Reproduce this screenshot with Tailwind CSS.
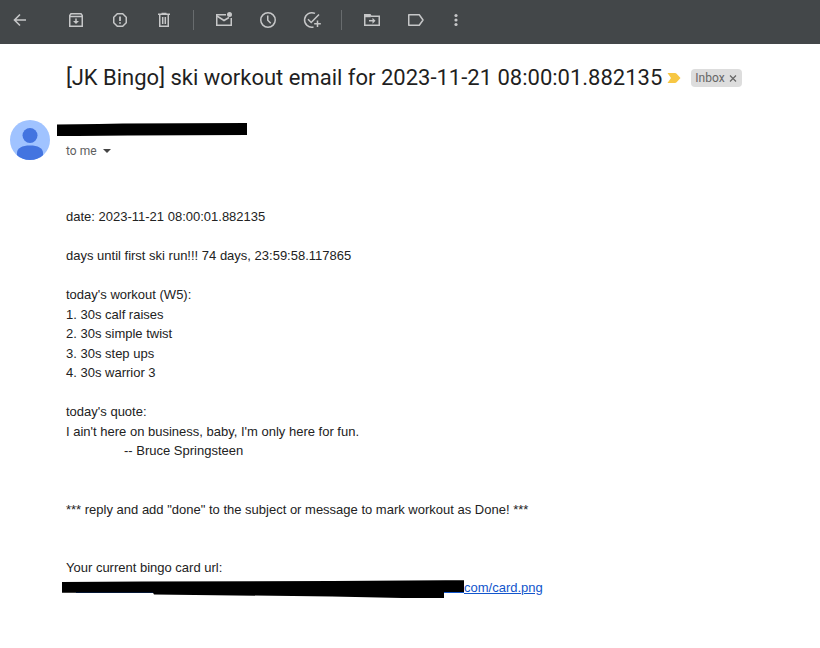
<!DOCTYPE html>
<html lang="en">
<head>
<meta charset="utf-8">
<meta name="viewport" content="width=device-width, initial-scale=1">
<title>[JK Bingo] ski workout email</title>
<script src="https://cdn.jsdelivr.net/npm/@tailwindcss/browser@4"></script>
</head>
<body class="min-h-screen bg-white font-['Liberation_Sans',Arial,sans-serif] text-[#222222]">
<header class="h-11 bg-[#434749] pb-1 text-[#c6c7c8]">
  <nav class="flex h-10 items-center" aria-label="Message actions">
    <button class="mr-3.5 flex h-10 w-10 items-center justify-center" aria-label="Back">
      <svg class="size-5" viewBox="0 0 20 20" fill="none" stroke="currentColor" stroke-width="1.6"><path d="M16 10H5M10 4.5 4.5 10l5.500 5.500"/></svg>
    </button>
    <button class="flex h-10 w-11 items-center justify-center" aria-label="Archive">
      <svg class="size-5" viewBox="0 0 20 20" fill="none" stroke="currentColor" stroke-width="1.5"><path d="M3.750 5.500 5 3.750h10l1.250 1.750v10.750H3.750z"/><path d="M4 6.500h12"/><path d="M10 8.500v4"/><path d="M7 11h6l-3 3z" fill="currentColor" stroke="none"/></svg>
    </button>
    <button class="flex h-10 w-11 items-center justify-center" aria-label="Report spam">
      <svg class="size-5" viewBox="0 0 20 20" fill="none" stroke="currentColor" stroke-width="1.5"><path d="M7.300 3.750h5.400l3.550 3.550v5.400l-3.550 3.550H7.300L3.750 12.700V7.300z"/><path stroke-width="1.8" d="M10 6.500v4.500M10 12.200v1.600"/></svg>
    </button>
    <button class="flex h-10 w-11 items-center justify-center" aria-label="Delete">
      <svg class="size-5" viewBox="0 0 20 20" fill="none" stroke="currentColor" stroke-width="1.500"><path d="M4 4.250h12M5.750 4.500v11.750h8.500V4.500M8.700 7v7M11.300 7v7"/><path d="M7.500 3.500h5"/></svg>
    </button>
    <span class="mr-2 ml-[7px] h-5 w-px bg-[#686c6e]"></span>
    <button class="flex h-10 w-11 items-center justify-center" aria-label="Mark as unread">
      <svg class="size-5" viewBox="0 0 20 20" fill="none" stroke="currentColor" stroke-width="1.500"><path d="M12 4.750H2.750v10.500h14.500V8"/><path d="m3 6 7 4.500L15 7.500"/><circle cx="15.500" cy="4.500" r="2.500" fill="currentColor" stroke="none"/></svg>
    </button>
    <button class="flex h-10 w-11 items-center justify-center" aria-label="Snooze">
      <svg class="size-5" viewBox="0 0 20 20" fill="none" stroke="currentColor" stroke-width="1.500"><circle cx="10" cy="10" r="7.250"/><path d="M9.750 5.500v4.800l3 3"/></svg>
    </button>
    <button class="flex h-10 w-11 items-center justify-center" aria-label="Add to Tasks">
      <svg class="size-5" viewBox="0 0 20 20" fill="none" stroke="currentColor" stroke-width="1.500"><path d="M13 3.450A7.250 7.250 0 1 0 11.500 17"/><path d="m6 9.300 3.200 3.200 7.800-8M15.500 10.500v6.500M12.200 13.750h6.600"/></svg>
    </button>
    <span class="mr-2 ml-[7px] h-5 w-px bg-[#686c6e]"></span>
    <button class="flex h-10 w-11 items-center justify-center" aria-label="Move to">
      <svg class="size-5" viewBox="0 0 20 20" fill="none" stroke="currentColor" stroke-width="1.500"><path d="M2.750 4.750h5l1.500 1.500h8v9H2.750z"/><path d="M3 5h5v1.500H3z" fill="currentColor"/><path d="M7 10.700h4.500"/><path d="M10.500 7.700v6l3-3z" fill="currentColor" stroke="none"/></svg>
    </button>
    <button class="flex h-10 w-11 items-center justify-center" aria-label="Labels">
      <svg class="size-5" viewBox="0 0 20 20" fill="none" stroke="currentColor" stroke-width="1.500" stroke-linejoin="round"><path d="M2.750 4.750h10.500L17 10l-3.750 5.250H2.750z"/></svg>
    </button>
    <button class="flex h-10 w-9 items-center justify-center" aria-label="More">
      <svg class="size-5" viewBox="0 0 20 20" fill="currentColor"><circle cx="10" cy="5.500" r="1.600"/><circle cx="10" cy="10" r="1.600"/><circle cx="10" cy="14.500" r="1.600"/></svg>
    </button>
  </nav>
</header>
<main>
  <div class="flex items-center pt-5 pl-[66px]">
    <h1 class="font-['Roboto',sans-serif] text-[22px] leading-7 text-[#1f1f1f]">[JK Bingo] ski workout email for 2023-11-21 08:00:01.882135</h1>
    <button class="ml-[5px] shrink-0" aria-label="Important">
      <svg class="h-2.5 w-3.5" viewBox="0 0 14 10" fill="#f7c744"><path d="M.5 0H8q1 0 1.600.8L13.500 5 9.600 9.200Q9 10 8 10H.5L4 5z"/></svg>
    </button>
    <div class="ml-2.5 flex h-[18px] shrink-0 items-center rounded bg-[#dddddd] px-1 font-['Roboto',sans-serif] text-xs text-[#666666]">
      <span>Inbox</span>
      <button class="ml-[3px] flex size-2.5 items-center justify-center" aria-label="Remove Inbox label"><svg class="size-2" viewBox="0 0 8 8" fill="none" stroke="currentColor" stroke-width="1.200"><path d="m1 1.500 6 6M7 1.500l-6 6"/></svg></button>
    </div>
  </div>
  <div class="flex items-start pt-7 pl-2.5">
    <svg class="size-10 shrink-0" viewBox="0 0 40 40" role="img" aria-label="Sender"><defs><clipPath id="face"><circle cx="20" cy="20" r="20"/></clipPath></defs><g clip-path="url(#face)"><path fill="#a0c3ff" d="M0 0h40v40H0z"/><circle cx="20" cy="15.500" r="7.500" fill="#4374e0"/><path fill="#4374e0" d="M7 40v-7c0-5 5-7.500 13-7.500S33 28 33 33v7z"/></g></svg>
    <div class="ml-[7px] pt-[3px]">
      <svg class="block h-[13px] w-[190px]" viewBox="0 0 190 13" role="img" aria-label="Sender hidden"><path d="M0 1.500 42 1l24-.5L190 0v12l-119 .5L0 13.200z"/></svg>
      <button class="mt-[7px] ml-[9px] flex items-center font-['Roboto',sans-serif] text-xs leading-4 text-[#5e5e5e]">to me
        <svg class="ml-1.5 h-1 w-2" viewBox="0 0 8 4" fill="#444444"><path d="M0 0h8L4 4z"/></svg>
      </button>
    </div>
  </div>
  <article class="px-[66px] pt-[47px] text-[13px] leading-normal">
    <p>date: 2023-11-21 08:00:01.882135</p>
    <br>
    <p>days until first ski run!!! 74 days, 23:59:58.117865</p>
    <br>
    <p>today's workout (W5):</p>
    <p>1. 30s calf raises</p>
    <p>2. 30s simple twist</p>
    <p>3. 30s step ups</p>
    <p>4. 30s warrior 3</p>
    <br>
    <p>today's quote:</p>
    <p>I ain't here on business, baby, I'm only here for fun.</p>
    <p class="pl-[58px]">-- Bruce Springsteen</p>
    <br><br>
    <p>*** reply and add "done" to the subject or message to mark workout as Done! ***</p>
    <br><br>
    <p>Your current bingo card url:</p>
    <a href="#card" class="-ml-1 flex items-center text-[#1155cc] underline">
      <svg class="h-5 w-[402px] shrink-0" viewBox="0 0 402 20" role="img" aria-label="Address hidden"><path stroke="#1155cc" d="M14 14.500h388"/><path d="M0 4 80 3.500l190-.5L384 2.300h18v11.700h-20v6H340L270 18.500 92 16.500l-1-1.800H0z"/></svg>
      <span>com/card.png</span>
    </a>
  </article>
</main>
</body>
</html>
